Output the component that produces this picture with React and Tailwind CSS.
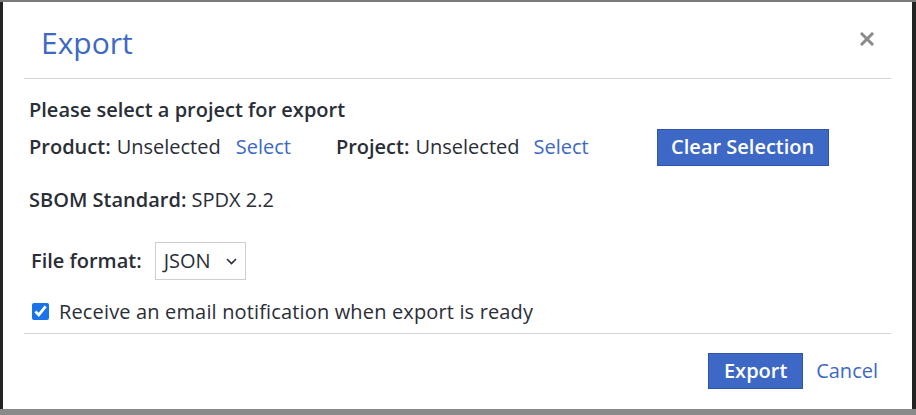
import { useState } from "react";

export default function App() {
  const [notify, setNotify] = useState(true);

  return (
    <div className="w-[916px] h-[415px] bg-[#232323] overflow-hidden font-['Open_Sans',sans-serif]">
      <div className="h-[2px] bg-[#7a7a7a]" />
      <div className="ml-[3px] w-[909px] h-[407px] bg-white flex flex-col">
        {/* Header */}
        <div className="mx-[21px] h-[77px] border-b border-[#d4d4d4] flex items-center justify-between pt-[5px]">
          <h1 className="ml-[17px] text-[30px] text-[#3d68c5] leading-none">Export</h1>
          <button className="mr-[17px] mb-[7px]">
            <svg width="14" height="14" viewBox="0 0 14 14" stroke="#8a8a8a" strokeWidth="3" strokeLinecap="square">
              <path d="M2 2 L12 12 M12 2 L2 12" />
            </svg>
          </button>
        </div>

        {/* Body */}
        <div className="mx-[21px] border-b border-[#d4d4d4] h-[255px] pl-[5px] pt-[17px] text-[#2a2e37] text-[20px]">
          <p className="font-semibold leading-[27px]">Please select a project for export</p>
          <div className="flex items-center h-[38px] mt-[5px]">
            <span className="font-semibold">Product:</span>
            <span className="ml-[6px]">Unselected</span>
            <a className="ml-[15px] text-[#3d68c5]">Select</a>
            <span className="ml-[45px] font-semibold">Project:</span>
            <span className="ml-[6px]">Unselected</span>
            <a className="ml-[14px] text-[#3d68c5]">Select</a>
            <button className="ml-[68px] h-[37px] w-[172px] bg-[#3d68c6] border border-[#2f55a8] text-white font-semibold">
              Clear Selection
            </button>
          </div>
          <p className="mt-[20px] leading-[27px]">
            <span className="font-semibold">SBOM Standard:</span> SPDX 2.2
          </p>
          <div className="flex items-center mt-[29px] ml-[2px]">
            <span className="font-semibold">File format:</span>
            <div className="ml-[13px] w-[91px] h-[38px] border border-[#cfcfcf] flex items-center justify-between pl-[8px] pr-[8px]">
              <span>JSON</span>
              <svg width="11" height="7" viewBox="0 0 11 7" fill="none" stroke="#2a2e37" strokeWidth="1.6">
                <path d="M1 1 L5.5 5.5 L10 1" />
              </svg>
            </div>
          </div>
          <label className="flex items-center mt-[18px] ml-[3px] leading-[27px]">
            <input
              type="checkbox"
              checked={notify}
              onChange={(e) => setNotify(e.target.checked)}
              className="w-[17px] h-[17px] accent-[#1a73e8]"
            />
            <span className="ml-[10px] tracking-[0.15px]">Receive an email notification when export is ready</span>
          </label>
        </div>

        {/* Footer */}
        <div className="flex items-center justify-end pr-[34px] pt-[19px] text-[20px]">
          <button className="h-[36px] w-[95px] bg-[#3d68c6] border border-[#2f55a8] text-white font-semibold">
            Export
          </button>
          <a className="ml-[13px] text-[#3d68c5]">Cancel</a>
        </div>
      </div>
      <div className="h-[6px] bg-[#8a8a8a]" />
    </div>
  );
}
